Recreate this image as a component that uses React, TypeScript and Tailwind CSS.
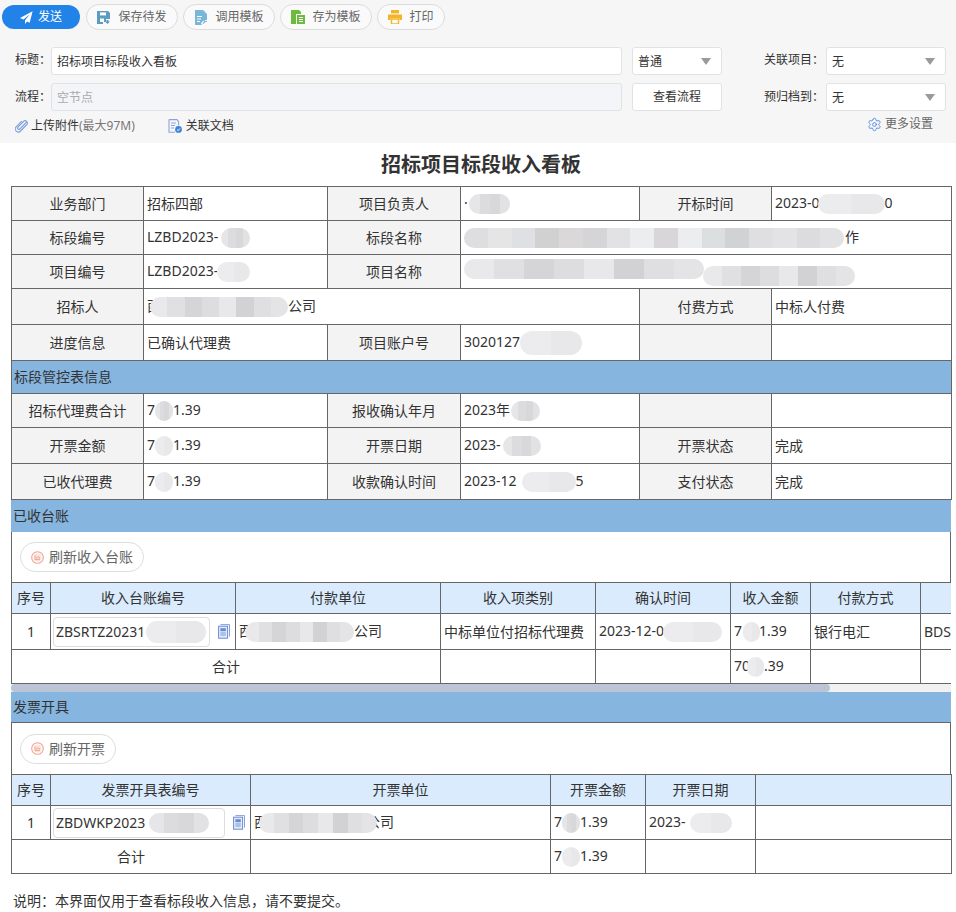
import React from "react";
import { Settings } from "lucide-react";

const G1 = ["#e6e6e8", "#dcdcde", "#d8d8da", "#e2e2e4"];
const G2 = ["#e9e9eb", "#e0e0e3", "#d5d5d7", "#dddde0", "#e8e8ea", "#d2d2d4", "#dfdfe2", "#e4e4e6"];
const G3 = ["#dedee0", "#e6e5e6", "#dfe0e3", "#d2d1d2", "#dbd8d9", "#d5d5d7", "#e2e2e4", "#ecedee", "#d8d6d8", "#ecedef", "#dcdfe0", "#d1d2d4", "#dfdfe1", "#e3e3e5", "#dcdcdf", "#e2e2e4"];
const G4 = ["#ececee", "#e8e8ea"];

function Blob({ className, colors }: { className: string; colors: string[] }) {
  return (
    <span className={"inline-flex align-middle rounded-full overflow-hidden h-[20px] " + className}>
      {colors.map((c, i) => (
        <span key={i} className="flex-1" style={{ backgroundColor: c }} />
      ))}
    </span>
  );
}

function Caret() {
  return (
    <svg width="10" height="7" viewBox="0 0 10 7" className="shrink-0">
      <path d="M0 0H10L5 7Z" fill="#9a9a9a" />
    </svg>
  );
}

function SendIcon() {
  return (
    <svg width="13" height="13" viewBox="0 0 13 13">
      <path d="M12.6.3 0 7l3.4 1.6 6.6-5.4-5 6.1V13l2-2.6 2.7 1.3z" fill="#fff" />
    </svg>
  );
}
function SaveIcon() {
  return (
    <svg width="14" height="14" viewBox="0 0 14 14">
      <path d="M0 1h11l2 2v6H9v3H6v2H0z" fill="#5a9cc2" />
      <rect x="3" y="2.4" width="6" height="3" fill="#fff" />
      <rect x="3" y="8.5" width="4" height="3.5" fill="#fff" />
      <path d="M9.5 10h2v1.5H13L10.5 14 8 11.5h1.5z" fill="#5a9cc2" />
    </svg>
  );
}
function LoadIcon() {
  return (
    <svg width="14" height="15" viewBox="0 0 14 15">
      <path d="M1 0h8l4 4v6h-3l-3 3 1 2H1z" fill="#7ab6d6" />
      <path d="M3 6.5h5M3 9h4M3 11.5h3" stroke="#fff" strokeWidth="1" />
      <path d="M9 9.5l2 2-2 2M13 11.5H10" stroke="#7ab6d6" strokeWidth="1.2" fill="none" />
    </svg>
  );
}
function StoreIcon() {
  return (
    <svg width="14" height="14" viewBox="0 0 14 14">
      <path d="M0 0h8l2 2v2H5v10H0z" fill="#6dbb3c" />
      <rect x="6" y="5" width="8" height="9" fill="#6dbb3c" />
      <path d="M8 7.5h4M8 9.5h4M8 11.5h4" stroke="#fff" strokeWidth="1" />
    </svg>
  );
}
function PrintIcon() {
  return (
    <svg width="14" height="14" viewBox="0 0 14 14">
      <rect x="3" y="0" width="8" height="3.4" fill="#f5b428" />
      <path d="M0 4.5h14v5.5h-2.6V8H2.6v2H0z" fill="#f5b428" />
      <path d="M3.5 9h7v5h-7z" fill="none" stroke="#f5b428" strokeWidth="1.4" />
    </svg>
  );
}
function ClipIcon() {
  return (
    <svg width="13" height="14" viewBox="0 0 13 14" fill="none">
      <path d="M11.6 3.2 4.9 10a1.3 1.3 0 0 1-1.9-1.9L9.2 1.8a2.5 2.5 0 0 1 3 3.4L5.6 12a3 3 0 0 1-4.4-4.2L6.5 2.4" stroke="#7d9fdc" strokeWidth="1.1" strokeLinecap="round" />
    </svg>
  );
}
function LinkDocIcon() {
  return (
    <svg width="14" height="14" viewBox="0 0 14 14" fill="none">
      <path d="M1 .6h8l1.6 2v4M1 .6v12.6h6" stroke="#8fa2da" strokeWidth="1.1" />
      <path d="M3 4h5M3 6.5h4M3 9h3" stroke="#8fa2da" strokeWidth="1" />
      <circle cx="10.5" cy="10.4" r="3.4" fill="#3f82d8" />
      <path d="M9 10.6l1.2 1.1 1.8-2.3" stroke="#fff" strokeWidth="0.9" />
    </svg>
  );
}
function RefreshIcon() {
  return (
    <svg width="13" height="13" viewBox="0 0 13 13" fill="none">
      <circle cx="6.5" cy="6.5" r="5.8" stroke="#f0a48e" strokeWidth="1.1" />
      <circle cx="6.5" cy="6.5" r="4" fill="#fbe6df" />
      <path d="M4 4.2v4.4h5M5.5 7.5V6M7 7.5V5M8.5 7.5V6" stroke="#ea8f76" strokeWidth="0.7" />
    </svg>
  );
}
function ListDocIcon() {
  return (
    <svg width="12" height="15" viewBox="0 0 12 15" fill="none">
      <path d="M2.5.6h9v12" stroke="#86a0dc" strokeWidth="1" />
      <rect x=".6" y="2.2" width="9" height="12" fill="#e4ebfa" stroke="#6a8ad4" strokeWidth="1" />
      <rect x="2.4" y="4.2" width="5.4" height="3" fill="#6a8ad4" />
      <path d="M2.4 9h5.4M2.4 11h5.4" stroke="#6a8ad4" strokeWidth="0.9" />
    </svg>
  );
}

function ToolButton({ icon, label, className }: { icon: React.ReactNode; label: string; className: string }) {
  return (
    <button className={"flex items-center justify-center gap-[7px] h-[26px] rounded-full border border-[#dcdcdc] bg-[#fafafa] text-[12px] text-[#666] " + className}>
      {icon}
      <span>{label}</span>
    </button>
  );
}

const labelCell = "border border-[#666] bg-[#f3f3f3] text-center font-normal";
const valueCell = "border border-[#666] pl-[3px] text-left whitespace-nowrap overflow-hidden";
const headCell = "border border-[#666] bg-[#d9ebfc] text-center font-normal";
const bodyCell = "border border-[#666] pl-[3px] text-left whitespace-nowrap overflow-hidden";

function Row({ h, cells }: { h: string; cells: [string, React.ReactNode, string, React.ReactNode, string, React.ReactNode] }) {
  return (
    <tr className={h}>
      <th className={labelCell}>{cells[0]}</th>
      <td className={valueCell}>{cells[1]}</td>
      <th className={labelCell}>{cells[2]}</th>
      <td className={valueCell}>{cells[3]}</td>
      <th className={labelCell}>{cells[4]}</th>
      <td className={valueCell}>{cells[5]}</td>
    </tr>
  );
}

function Band({ text, className }: { text: string; className: string }) {
  return <div className={"flex items-center bg-[#86b5e0] pl-[2px] text-[14px] " + className}>{text}</div>;
}

function Refresh({ label, className }: { label: string; className: string }) {
  return (
    <button className={"flex items-center justify-center gap-[5px] h-[30px] rounded-full border border-[#ddd] text-[14px] text-[#666] " + className}>
      <RefreshIcon />
      <span>{label}</span>
    </button>
  );
}

export default function App() {
  return (
    <div className="w-[956px] h-[912px] overflow-hidden bg-white text-[#333] text-[14px] leading-[20px] font-['Noto_Sans','Noto_Sans_CJK_SC',sans-serif]">
      <header className="h-[143px] bg-[#f6f6f7] text-[12px]">
        <div className="flex items-center gap-[5px] pl-[2px] pt-[4px]">
          <button className="flex items-center justify-center gap-[5px] w-[78px] h-[24px] mr-[1px] rounded-full bg-[#2183e8] text-white">
            <SendIcon />
            <span>发送</span>
          </button>
          <ToolButton icon={<SaveIcon />} label="保存待发" className="w-[92px]" />
          <ToolButton icon={<LoadIcon />} label="调用模板" className="w-[92px]" />
          <ToolButton icon={<StoreIcon />} label="存为模板" className="w-[92px]" />
          <ToolButton icon={<PrintIcon />} label="打印" className="w-[68px]" />
        </div>
        <div className="flex items-center pl-[15px] mt-[17px] h-[28px]">
          <label className="w-[36px] -mt-[2px]">标题：</label>
          <div className="w-[571px] h-[28px] flex items-center pl-[5px] pt-[1px] bg-white border border-[#e2e2e5] rounded-[3px]">招标项目标段收入看板</div>
          <div className="w-[90px] h-[28px] ml-[10px] flex items-center justify-between pl-[5px] pr-[10px] pt-[1px] bg-white border border-[#e2e2e5] rounded-[3px]">
            <span>普通</span>
            <Caret />
          </div>
          <label className="w-[102px] text-right -mt-[2px]">关联项目：</label>
          <div className="w-[120px] h-[28px] ml-[2px] flex items-center justify-between pl-[5px] pr-[10px] pt-[1px] bg-white border border-[#e2e2e5] rounded-[3px]">
            <span>无</span>
            <Caret />
          </div>
        </div>
        <div className="flex items-center pl-[15px] mt-[8px] h-[28px]">
          <label className="w-[36px] -mt-[1px]">流程：</label>
          <div className="w-[571px] h-[28px] flex items-center pl-[5px] pt-[1px] bg-[#f4f5f8] border border-[#e2e2e5] rounded-[3px] text-[#aaa]">空节点</div>
          <button className="w-[90px] h-[28px] ml-[10px] bg-white border border-[#e2e2e5] rounded-[3px]">查看流程</button>
          <label className="w-[102px] text-right -mt-[1px]">预归档到：</label>
          <div className="w-[120px] h-[28px] ml-[2px] flex items-center justify-between pl-[5px] pr-[10px] pt-[1px] bg-white border border-[#e2e2e5] rounded-[3px]">
            <span>无</span>
            <Caret />
          </div>
        </div>
        <div className="flex items-center pl-[15px] pr-[23px] mt-[6px] h-[18px]">
          <ClipIcon />
          <span className="ml-[3px]">上传附件<span className="text-[#777]">(最大97M)</span></span>
          <span className="ml-[33px]"><LinkDocIcon /></span>
          <span className="ml-[4px]">关联文档</span>
          <span className="ml-auto -mt-[4px]"><Settings size={15} color="#5c90e2" strokeWidth={1.6} /></span>
          <span className="ml-[3px] -mt-[4px] text-[#666]">更多设置</span>
        </div>
      </header>

      <h1 className="w-[940px] ml-[11px] h-[43px] flex items-center justify-center text-[20px] font-bold">招标项目标段收入看板</h1>

      <div className="w-[940px] ml-[11px]">
        <table className="w-[940px] table-fixed border-collapse">
          <colgroup>
            <col className="w-[132px]" />
            <col className="w-[184px]" />
            <col className="w-[133px]" />
            <col className="w-[179px]" />
            <col className="w-[132px]" />
            <col className="w-[180px]" />
          </colgroup>
          <tbody>
            <Row h="h-[34px]" cells={["业务部门", "招标四部", "项目负责人", <>· <Blob className="w-[41px] -ml-[2px]" colors={G1} /></>, "开标时间", <>2023-0<Blob className="w-[67px] -ml-[2px]" colors={G4} />0</>]} />
            <tr className="h-[34px]">
              <th className={labelCell}>标段编号</th>
              <td className={valueCell}>LZBD2023-<Blob className="w-[29px] ml-[3px]" colors={G1} /></td>
              <th className={labelCell}>标段名称</th>
              <td className={valueCell} colSpan={3}>
                <Blob className="w-[380px]" colors={G3} />
                <span className="ml-[1px]">作</span>
              </td>
            </tr>
            <tr className="h-[34px]">
              <th className={labelCell}>项目编号</th>
              <td className={valueCell}>LZBD2023-<Blob className="w-[33px] -ml-[1px]" colors={G4} /></td>
              <th className={labelCell}>项目名称</th>
              <td className={valueCell} colSpan={3}>
                <Blob className="w-[240px] -translate-y-[3px]" colors={G2} />
                <Blob className="w-[152px] translate-y-[4px] -ml-[1px]" colors={G2} />
              </td>
            </tr>
            <tr className="h-[36px]">
              <th className={labelCell}>招标人</th>
              <td className={valueCell} colSpan={3}>西<Blob className="w-[138px] -ml-[11px]" colors={G2} />公司</td>
              <th className={labelCell}>付费方式</th>
              <td className={valueCell}>中标人付费</td>
            </tr>
            <Row h="h-[36px]" cells={["进度信息", "已确认代理费", "项目账户号", <>3020127<Blob className="w-[62px] h-[24px]" colors={G4} /></>, "", ""]} />
            <tr className="h-[33px]">
              <td colSpan={6} className="border border-[#666] bg-[#86b5e0] pl-[2px] text-[14px]">标段管控表信息</td>
            </tr>
            <Row h="h-[34px]" cells={["招标代理费合计", <>7<Blob className="w-[18px]" colors={G1} />1.39</>, "报收确认年月", <>2023年<Blob className="w-[29px] ml-[1px]" colors={G1} /></>, "", ""]} />
            <Row h="h-[36px]" cells={["开票金额", <>7<Blob className="w-[18px]" colors={G4} />1.39</>, "开票日期", <>2023-<Blob className="w-[38px] ml-[2px]" colors={G1} /></>, "开票状态", "完成"]} />
            <Row h="h-[36px]" cells={["已收代理费", <>7<Blob className="w-[18px]" colors={G4} />1.39</>, "收款确认时间", <>2023-12<Blob className="w-[54px] ml-[5px]" colors={G4} />5</>, "支付状态", "完成"]} />
          </tbody>
        </table>

        <Band text="已收台账" className="h-[32px]" />
        <div className="h-[50px] w-[940px] flex items-center pl-[8px] border-x border-[#666]">
          <Refresh label="刷新收入台账" className="w-[124px]" />
        </div>
        <div className="w-[940px] overflow-hidden">
          <table className="w-[1079px] table-fixed border-collapse">
            <colgroup>
              <col className="w-[39px]" />
              <col className="w-[185px]" />
              <col className="w-[205px]" />
              <col className="w-[155px]" />
              <col className="w-[135px]" />
              <col className="w-[80px]" />
              <col className="w-[110px]" />
              <col className="w-[170px]" />
            </colgroup>
            <tbody>
              <tr className="h-[31px]">
                <th className={headCell}>序号</th>
                <th className={headCell}>收入台账编号</th>
                <th className={headCell}>付款单位</th>
                <th className={headCell}>收入项类别</th>
                <th className={headCell}>确认时间</th>
                <th className={headCell}>收入金额</th>
                <th className={headCell}>付款方式</th>
                <th className={headCell}></th>
              </tr>
              <tr className="h-[36px]">
                <td className="border border-[#666] text-center">1</td>
                <td className="border border-[#666]">
                  <div className="flex items-center pl-[2px]">
                    <div className="w-[157px] h-[30px] flex items-center pl-[2px] border border-[#ddd] rounded-[4px] whitespace-nowrap overflow-hidden">ZBSRTZ20231<Blob className="w-[60px] h-[22px] shrink-0 ml-[1px]" colors={G4} /></div>
                    <span className="ml-[8px]"><ListDocIcon /></span>
                  </div>
                </td>
                <td className={bodyCell}>西<Blob className="w-[109px] -ml-[8px]" colors={G2} />公司</td>
                <td className={bodyCell}>中标单位付招标代理费</td>
                <td className={bodyCell}>2023-12-0<Blob className="w-[59px] -ml-[1px]" colors={G4} /></td>
                <td className={bodyCell}>7<Blob className="w-[17px] ml-[1px] -mr-[1px]" colors={G4} />1.39</td>
                <td className={bodyCell}>银行电汇</td>
                <td className={bodyCell}>BDS</td>
              </tr>
              <tr className="h-[34px]">
                <td className="border border-[#666] text-center" colSpan={3}>合计</td>
                <td className="border border-[#666]"></td>
                <td className="border border-[#666]"></td>
                <td className={bodyCell}>70<Blob className="w-[17px] -ml-[3px]" colors={G4} />.39</td>
                <td className="border border-[#666]"></td>
                <td className="border border-[#666]"></td>
              </tr>
            </tbody>
          </table>
          <div className="h-[8px] bg-[#f1f1f1]">
            <div className="w-[819px] h-[8px] rounded-full bg-[#bcc5d6]" />
          </div>
        </div>

        <Band text="发票开具" className="h-[31px] border-b border-[#666]" />
        <div className="h-[51px] w-[940px] flex items-center pl-[8px] border-x border-[#666]">
          <Refresh label="刷新开票" className="w-[96px]" />
        </div>
        <table className="w-[940px] table-fixed border-collapse">
          <colgroup>
            <col className="w-[39px]" />
            <col className="w-[200px]" />
            <col className="w-[300px]" />
            <col className="w-[95px]" />
            <col className="w-[110px]" />
            <col className="w-[196px]" />
          </colgroup>
          <tbody>
            <tr className="h-[31px]">
              <th className={headCell}>序号</th>
              <th className={headCell}>发票开具表编号</th>
              <th className={headCell}>开票单位</th>
              <th className={headCell}>开票金额</th>
              <th className={headCell}>开票日期</th>
              <th className={headCell}></th>
            </tr>
            <tr className="h-[34px]">
              <td className="border border-[#666] text-center">1</td>
              <td className="border border-[#666]">
                <div className="flex items-center pl-[2px]">
                  <div className="w-[172px] h-[30px] flex items-center pl-[2px] border border-[#ddd] rounded-[4px] whitespace-nowrap overflow-hidden">ZBDWKP2023<Blob className="w-[60px] shrink-0 ml-[4px]" colors={G1} /></div>
                  <span className="ml-[8px]"><ListDocIcon /></span>
                </div>
              </td>
              <td className={bodyCell}>西<Blob className="w-[118px] -ml-[9px] -mr-[11px] relative z-10" colors={G2} />公司</td>
              <td className={bodyCell}>7<Blob className="w-[18px]" colors={G1} />1.39</td>
              <td className={bodyCell}>2023-<Blob className="w-[42px] ml-[4px]" colors={G4} /></td>
              <td className="border border-[#666]"></td>
            </tr>
            <tr className="h-[34px]">
              <td className="border border-[#666] text-center" colSpan={2}>合计</td>
              <td className="border border-[#666]"></td>
              <td className={bodyCell}>7<Blob className="w-[18px]" colors={G4} />1.39</td>
              <td className="border border-[#666]"></td>
              <td className="border border-[#666]"></td>
            </tr>
          </tbody>
        </table>
      </div>

      <p className="ml-[13px] mt-[17px] text-[14px]">说明：本界面仅用于查看标段收入信息，请不要提交。</p>
    </div>
  );
}
